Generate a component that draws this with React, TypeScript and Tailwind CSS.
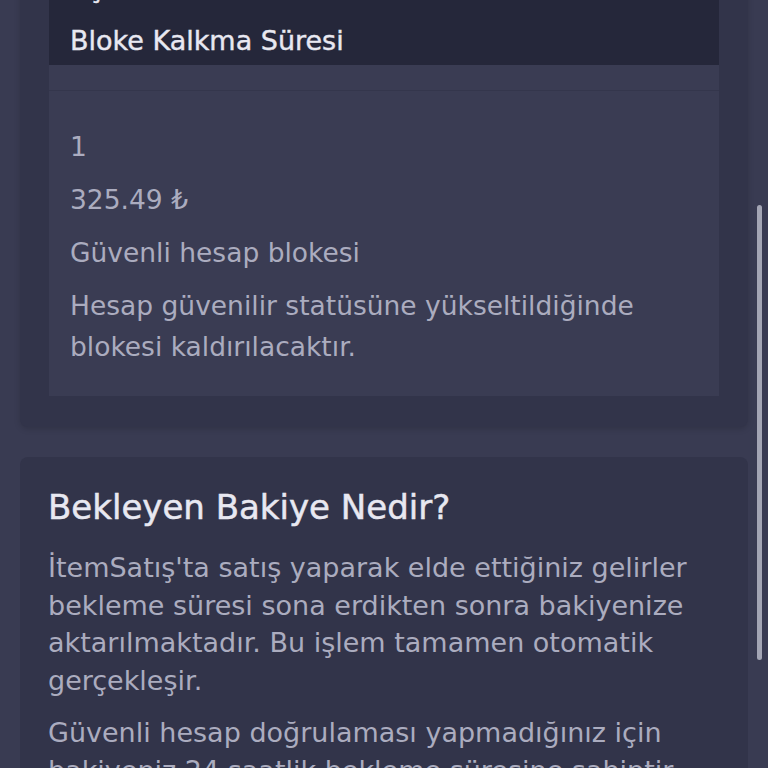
import React from "react";

const font = { fontFamily: "'DejaVu Sans', 'Noto Sans', sans-serif" };

export default function App() {
  return (
    <div className="relative h-[768px] overflow-hidden bg-[#393b52]" style={font}>
      <div className="flex flex-col gap-[30px] px-5 -mt-[33px]">
        <div className="rounded-lg bg-[#32344a] px-[29px] pb-[31px] shadow-[0_2px_6px_rgba(0,0,0,0.15)]">
          <div className="bg-[#3a3c53]">
            <div className="flex flex-col gap-3 bg-[#25273a] px-[21px] pb-1 text-[27px] leading-[41px] text-[#e8e8f1] [-webkit-text-stroke:0.4px_#e8e8f1]">
              <div>Açıklama</div>
              <div>Bloke Kalkma Süresi</div>
            </div>
            <div className="h-[26px] border-b border-[#34364c]" />
            <div className="flex flex-col gap-3 px-[21px] pt-[35px] pb-[29px] text-[26.5px] leading-[41px] text-[#abacbf]">
              <div>1</div>
              <div>325.49 ₺</div>
              <div>Güvenli hesap blokesi</div>
              <div>Hesap güvenilir statüsüne yükseltildiğinde blokesi kaldırılacaktır.</div>
            </div>
          </div>
        </div>
        <div className="rounded-lg bg-[#32344a] px-7 pt-[30px] pb-10">
          <h2 className="text-[34px] leading-[40px] text-[#e8e8f1] [-webkit-text-stroke:0.5px_#e8e8f1]">Bekleyen Bakiye Nedir?</h2>
          <p className="mt-[22px] text-[27px] leading-[37.5px] text-[#abacbf]">
            İtemSatış'ta satış yaparak elde ettiğiniz gelirler bekleme süresi sona erdikten sonra bakiyenize aktarılmaktadır. Bu işlem tamamen otomatik gerçekleşir.
          </p>
          <p className="mt-[15px] text-[27px] leading-[37.5px] text-[#abacbf]">
            Güvenli hesap doğrulaması yapmadığınız için bakiyeniz 24 saatlik bekleme süresine sahiptir.
          </p>
        </div>
      </div>
      <div className="absolute right-[6px] top-[205px] h-[455px] w-[5px] rounded-full bg-[#a3a5b4]" />
    </div>
  );
}
